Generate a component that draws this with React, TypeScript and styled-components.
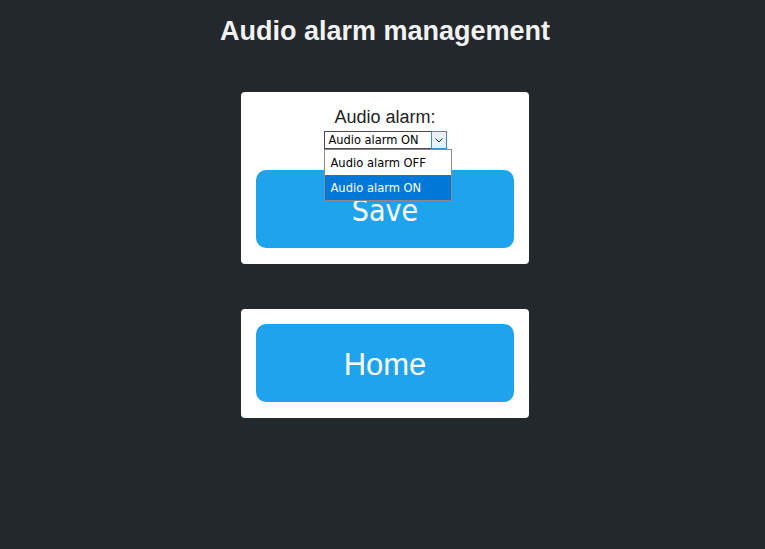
import React, { useState } from 'react';
import styled, { createGlobalStyle } from 'styled-components';

const GlobalStyle = createGlobalStyle`
  html, body {
    margin: 0;
    padding: 0;
    background: #23282d;
  }
  body {
    font-family: 'Liberation Sans', Arial, sans-serif;
  }
`;

type AlarmState = 'OFF' | 'ON';

const options: { value: AlarmState; label: string }[] = [
  { value: 'OFF', label: 'Audio alarm OFF' },
  { value: 'ON', label: 'Audio alarm ON' },
];

const App = () => {
  const [alarm] = useState<AlarmState>('ON');
  const current = options.find((o) => o.value === alarm);

  return (
    <Page>
      <GlobalStyle />
      <Title>Audio alarm management</Title>

      <Card>
        <Label>Audio alarm:</Label>
        <SelectWrap>
          <SelectBox>
            <SelectValue>{current?.label}</SelectValue>
            <Arrow>
              <svg width="8" height="5" viewBox="0 0 8 5">
                <path d="M0.5 0.5 L4 4 L7.5 0.5" fill="none" stroke="#333" strokeWidth="1" />
              </svg>
            </Arrow>
          </SelectBox>
          <OptionList>
            {options.map((o) => (
              <OptionItem key={o.value} $active={o.value === alarm}>
                {o.label}
              </OptionItem>
            ))}
          </OptionList>
        </SelectWrap>
        <Button $variant="save">Save</Button>
      </Card>

      <Card>
        <Button $variant="home">Home</Button>
      </Card>
    </Page>
  );
};

const Page = styled.div`
  display: flex;
  flex-direction: column;
  align-items: center;
  min-height: 549px;
  padding-left: 5px;
`;

const Title = styled.h1`
  margin: 15px 0 45px;
  font-family: 'Liberation Sans', Arial, sans-serif;
  font-size: 27px;
  line-height: 32px;
  font-weight: 700;
  color: #f2f2f2;
`;

const Card = styled.div`
  display: flex;
  flex-direction: column;
  align-items: center;
  box-sizing: border-box;
  width: 288px;
  padding: 15px 15px 16px;
  margin-bottom: 45px;
  background: #ffffff;
  border-radius: 4px;
`;

const Label = styled.div`
  font-family: 'Liberation Sans', Arial, sans-serif;
  font-size: 18px;
  line-height: 20px;
  color: #222;
`;

const SelectWrap = styled.div`
  position: relative;
  margin: 4px 0 21px;
`;

const SelectBox = styled.div`
  display: flex;
  box-sizing: border-box;
  width: 123px;
  height: 18px;
  border: 1px solid #4a4a4a;
  border-right: none;
  background: #fff;
`;

const SelectValue = styled.span`
  flex: 1;
  padding-left: 4px;
  font-family: 'DejaVu Sans Condensed', 'DejaVu Sans', sans-serif;
  font-size: 12.7px;
  line-height: 16px;
  color: #000;
  white-space: nowrap;
`;

const Arrow = styled.span`
  display: flex;
  align-items: center;
  justify-content: center;
  box-sizing: border-box;
  width: 16px;
  height: 18px;
  margin-top: -1px;
  border: 1px solid #3c8fd8;
  background: #e5f1fb;
`;

const OptionList = styled.div`
  position: absolute;
  top: 100%;
  left: 0;
  z-index: 5;
  box-sizing: border-box;
  width: 128px;
  border: 1px solid #8a8a8a;
  background: #fff;
`;

const OptionItem = styled.div<{ $active: boolean }>`
  height: 25px;
  padding-left: 6px;
  font-family: 'DejaVu Sans Condensed', 'DejaVu Sans', sans-serif;
  font-size: 12.8px;
  line-height: 25px;
  white-space: nowrap;
  background: ${({ $active }) => ($active ? '#0078d7' : '#fff')};
  color: ${({ $active }) => ($active ? '#fff' : '#000')};
`;

const Button = styled.button<{ $variant: 'save' | 'home' }>`
  width: 258px;
  height: 78px;
  border: none;
  border-radius: 10px;
  background: #1fa3ec;
  color: #fff;
  cursor: pointer;
  font-family: ${({ $variant }) =>
    $variant === 'save'
      ? "'DejaVu Sans Condensed', 'DejaVu Sans', sans-serif"
      : "'Liberation Sans', Arial, sans-serif"};
  font-size: ${({ $variant }) => ($variant === 'save' ? '30px' : '31px')};
  line-height: 78px;
  padding: 2px 0 0;
`;

export default App;
